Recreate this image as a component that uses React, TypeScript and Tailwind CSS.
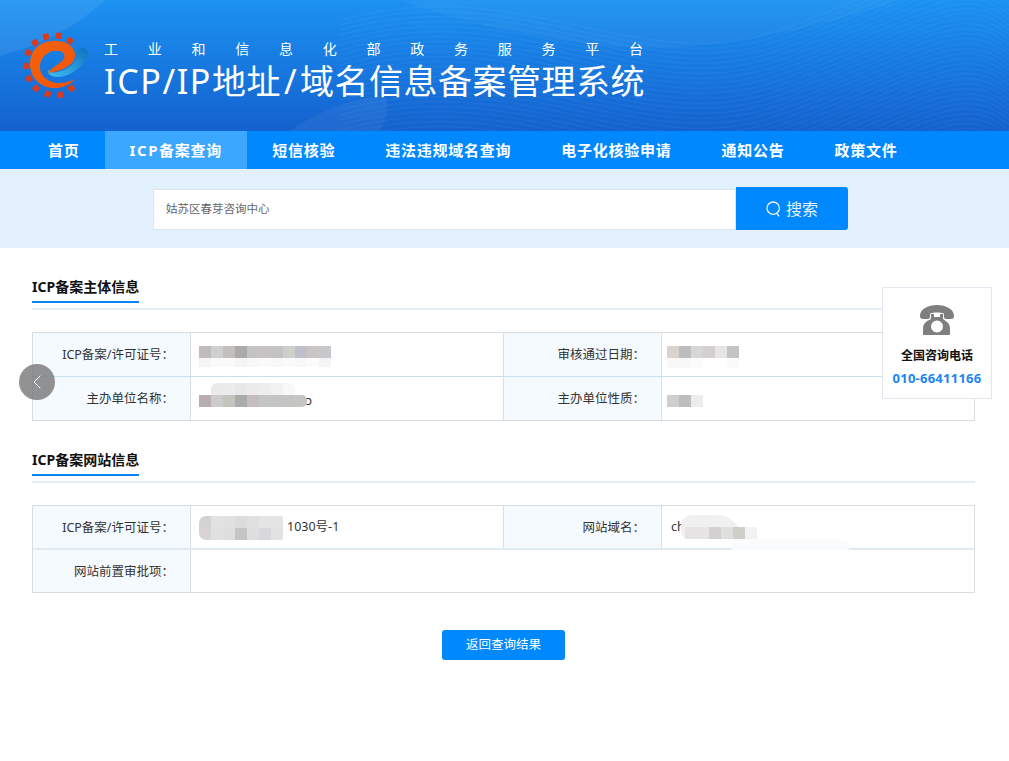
import { ReactNode } from 'react';
import { ChevronLeft } from 'lucide-react';

const navItems = ['首页', '备案查询', '短信核验', '违法违规域名查询', '电子化核验申请', '通知公告', '政策文件'];

function Logo() {
  const squares = [
    [12, 10.7, -35], [23, 4.7, -15], [36, 3.7, 5], [47, 8.7, 30], [5.3, 20.7, -60], [2.7, 34, 85],
    [6, 46.7, 65], [13, 56.3, 40], [24.7, 62, 15], [37, 62.7, -5], [48.3, 56.3, -35],
  ];
  return (
    <svg width="66" height="66" viewBox="0 0 66 66" className="shrink-0">
      <defs>
        <linearGradient id="ring" x1="0" y1="0" x2="1" y2="1">
          <stop offset="0" stopColor="#f4640f" />
          <stop offset="1" stopColor="#f15208" />
        </linearGradient>
        <linearGradient id="swoosh" x1="1" y1="0" x2="0" y2="1">
          <stop offset="0" stopColor="#0d72bd" />
          <stop offset="1" stopColor="#41bdf0" />
        </linearGradient>
      </defs>
      {squares.map(([x, y, r], i) => (
        <rect key={i} x={x - 3} y={y - 3} width="6" height="6" rx="0.8" fill="#db3a1c" transform={`rotate(${r} ${x} ${y})`} />
      ))}
      <path d="M54 17C60 15 66 17 65 22C63 32 48 45 35 45C28 45 24 42 25 38C28 41 33 41 38 39C48 36 56 28 54 17Z" fill="url(#swoosh)" />
      <path d="M52 47C44 56 30 59 19 53C7 46 4 31 10 20C16 9 32 6 43 11C52 15 55 24 49 31C43 37 33 40 25 41C28 36 35 33 39 29C43 25 42 20 36 19C27 17 18 24 17 33C16 44 26 51 36 51C42 51 48 49 52 47Z" fill="url(#ring)" />
    </svg>
  );
}

function HeaderDecor() {
  // faint wave lines on the right of the banner
  const lines = Array.from({ length: 46 }, (_, i) => {
    const y = i * 5 - 40;
    return `M340 ${y + 60} C 520 ${y + 10}, 640 ${y + 120}, 780 ${y + 70} S 960 ${y - 20}, 1009 ${y + 20}`;
  });
  return (
    <svg className="absolute inset-0" width="1009" height="131" viewBox="0 0 1009 131">
      <path d="M0 0H105C75 28 40 45 0 56Z" fill="#ffffff" fillOpacity="0.08" />
      <path d="M290 131C320 110 360 96 387 98C388 110 386 122 380 131Z" fill="#ffffff" fillOpacity="0.05" />
      <path d="M400 0C470 25 560 45 640 48C720 50 830 25 900 0Z" fill="#ffffff" fillOpacity="0.04" />
      {lines.map((d, i) => (
        <path key={i} d={d} fill="none" stroke="#ffffff" strokeOpacity="0.05" strokeWidth="1" />
      ))}
    </svg>
  );
}

function Phone() {
  return (
    <svg width="34" height="30" viewBox="0 0 34 30" fill="#7f7f7f">
      <path d="M0 11C0 4 8 0 17 0C26 0 34 4 34 11C34 13 33 14 31 14H26C24.5 14 24 13 24 11.5V8.5C20 7 14 7 10 8.5V11.5C10 13 9.5 14 8 14H3C1 14 0 13 0 11Z" />
      <path fillRule="evenodd" d="M11 9H14V12H20V9H23V13C23 14 24 15 25 15.5C28 17 30 20 30 23V29C30 29.6 29.6 30 29 30H4C3.4 30 3 29.6 3 29V23C3 20 5 17 8 15.5C10 15 11 14 11 13ZM17 15.5A6 6 0 1 0 17 27.5A6 6 0 1 0 17 15.5Z" />
    </svg>
  );
}

function SearchGlyph() {
  return (
    <svg width="15" height="16" viewBox="0 0 15 16" fill="none" stroke="currentColor" strokeWidth="1.3">
      <circle cx="7.2" cy="7.2" r="6.2" />
      <path d="M10.8 12.2L12.8 15" strokeLinecap="round" />
    </svg>
  );
}

function SectionTitle({ children }: { children: ReactNode }) {
  return (
    <div className="border-b-2 border-[#e1edf7] pb-[5px]">
      <div className="inline-block border-b-2 border-[#0a84f5] pb-[4px] text-[14px] font-bold leading-[20px] text-[#111]">{children}</div>
    </div>
  );
}

function Mosaic({ cells, className }: { cells: string[]; className: string }) {
  return (
    <div className={`absolute flex ${className}`}>
      {cells.map((c, i) => (
        <span key={i} className={`h-full w-[12px] ${c}`} />
      ))}
    </div>
  );
}

function Label({ children }: { children: ReactNode }) {
  return (
    <div className="flex h-full w-[158px] shrink-0 items-center justify-end border-r border-[#d8e0e6] bg-[#f5faff] pr-[16px] pt-[2px] text-[12.5px] text-[#333]">
      {children}
    </div>
  );
}

function Value({ children, className = '' }: { children?: ReactNode; className?: string }) {
  return <div className={`relative flex h-full items-center pl-[9px] pt-[1px] text-[12.5px] text-[#333] ${className}`}>{children}</div>;
}

export default function App() {
  return (
    <div className="relative h-[761px] w-[1009px] overflow-hidden bg-white font-['Noto_Sans','Noto_Sans_CJK_SC',sans-serif]">
      <header className="relative h-[131px] bg-linear-to-b from-[#1c92f2] to-[#1561ce]">
        <HeaderDecor />
        <div className="relative flex h-full items-start pl-[23px] pt-[32px]">
          <Logo />
          <div className="ml-[15px] text-white">
            <div className="mt-[7px] text-[14px] leading-[20px] tracking-[29.75px] whitespace-nowrap">工业和信息化部政务服务平台</div>
            <div className="mt-[1px] text-[34px] leading-[42px] tracking-[0.5px] whitespace-nowrap">
              <span className="tracking-[1.6px]">ICP/IP</span>地址<span className="px-[3px]">/</span>域名信息备案管理系统
            </div>
          </div>
        </div>
      </header>

      <nav className="flex h-[38px] bg-[#0088ff] pl-[23px]">
        {navItems.map((item, i) => (
          <a key={item} className={`flex items-center px-[25px] text-[15px] font-bold tracking-[0.75px] text-white ${i === 1 ? 'bg-[#3ba7ff]' : ''}`}>
            {i === 1 && <span className="tracking-[1.6px]">ICP</span>}
            {item}
          </a>
        ))}
      </nav>

      <div className="flex h-[79px] items-center bg-[#e3f0fe] pl-[153px]">
        <div className="mt-[1px] flex h-[41px] w-[583px] items-center border border-[#dfe5ee] bg-white pl-[12px] text-[11.5px] text-[#666]">姑苏区春芽咨询中心</div>
        <button className="flex h-[43px] w-[112px] items-center justify-center gap-[5px] rounded-r-[3px] bg-[#0088ff] text-[16px] text-[#e8f3ff]">
          <SearchGlyph />
          搜索
        </button>
      </div>

      <main className="px-[32px] pr-[34px] pt-[26px]">
        <SectionTitle>ICP备案主体信息</SectionTitle>
        <div className="mt-[22px] border border-[#d9dde0]">
          <div className="flex h-[44px] border-b border-[#c9deee]">
            <Label>ICP备案/许可证号：</Label>
            <Value className="w-[313px] border-r border-[#d8e0e6]">
              <Mosaic className="left-[8px] top-[13px] h-[12px]" cells={['bg-[#c0bcbc]', 'bg-[#cdd0ce]', 'bg-[#c4bfbd]', 'bg-[#ababab]', 'bg-[#c4c2c3]', 'bg-[#c4c2c3]', 'bg-[#c4c2c3]', 'bg-[#ccd0c8]', 'bg-[#bfc0ca]', 'bg-[#c8c5c4]', 'bg-[#c8c8cc]']} />
              <Mosaic className="left-[8px] top-[25px] h-[9px]" cells={['bg-[#f5f5f5]', 'bg-[#fafafa]', 'bg-[#fafafa]', 'bg-[#f5f5f5]', 'bg-[#f8f8f8]', 'bg-[#fafafa]', 'bg-[#f8f8f8]', 'bg-[#fafafa]', 'bg-[#f8f8f8]', 'bg-[#fcfcfc]', 'bg-[#f5f5f5]']} />
            </Value>
            <Label>审核通过日期：</Label>
            <Value className="flex-1">
              <Mosaic className="left-[5px] top-[13px] h-[12px]" cells={['bg-[#d9d2cf]', 'bg-[#bbbdbe]', 'bg-[#d6d6d6]', 'bg-[#d3cfd0]', 'bg-[#e5e5e5]', 'bg-[#c3c3c3]']} />
              <Mosaic className="left-[5px] top-[25px] h-[10px]" cells={['bg-[#f8f8f8]', 'bg-[#f8f8f8]', 'bg-[#fbfbfb]', 'bg-white', 'bg-white', 'bg-[#fbfbfb]']} />
            </Value>
          </div>
          <div className="flex h-[43px]">
            <Label>主办单位名称：</Label>
            <Value className="w-[313px] border-r border-[#d8e0e6]">
              <Mosaic className="left-[20px] top-[6px] h-[12px] overflow-hidden rounded-t-[6px]" cells={['bg-[#eaeaea]', 'bg-[#ececec]', 'bg-[#e8e8e8]', 'bg-[#ececec]', 'bg-[#eeeeee]', 'bg-[#f2f2f2]', 'bg-[#f8f8f8]']} />
              <Mosaic className="left-[8px] top-[18px] h-[12px] overflow-hidden rounded-r-[5px]" cells={['bg-[#b8aeb2]', 'bg-[#cbcbcb]', 'bg-[#c4c4be]', 'bg-[#ababab]', 'bg-[#c4bdc1]', 'bg-[#c6c5c5]', 'bg-[#c6c5c5]', 'bg-[#c4c4c2]', 'bg-[#c6c5c3]']} />
              <span className="absolute left-[115px] top-[14px] leading-[20px]">ↄ</span>
            </Value>
            <Label>主办单位性质：</Label>
            <Value className="flex-1">
              <Mosaic className="left-[5px] top-[18px] h-[12px]" cells={['bg-[#cfcfcf]', 'bg-[#bdbdbc]', 'bg-[#ececec]']} />
            </Value>
          </div>
        </div>

        <div className="mt-[26px]">
          <SectionTitle>ICP备案网站信息</SectionTitle>
        </div>
        <div className="mt-[22px] border border-[#d9dde0]">
          <div className="flex h-[44px] border-b-2 border-[#e0eaf3]">
            <Label>ICP备案/许可证号：</Label>
            <Value className="w-[313px] border-r border-[#d8e0e6]">
              <div className="absolute left-[8px] top-[10px] grid h-[24px] w-[88px] grid-cols-[repeat(7,12px)] grid-rows-2 overflow-hidden rounded-[7px]">
                {['bg-[#d5d2d2]', 'bg-[#e2e2e2]', 'bg-[#e0e0e0]', 'bg-[#dcdcdc]', 'bg-[#e0e0e0]', 'bg-[#e4e4e4]', 'bg-[#e4e4e4]', 'bg-[#d8d4d4]', 'bg-[#e0e0e0]', 'bg-[#dedede]', 'bg-[#c4c4c4]', 'bg-[#dedede]', 'bg-[#d8d8dc]', 'bg-[#e2e2e2]'].map((c, i) => (
                  <span key={i} className={c} />
                ))}
              </div>
              <span className="ml-[87px]">1030号-1</span>
            </Value>
            <Label>网站域名：</Label>
            <Value className="flex-1">
              ch
              <div className="absolute left-[19px] top-[9px] h-[24px] w-[60px] rounded-tl-[14px] rounded-tr-[30px] rounded-bl-[10px] bg-[#f0f0f0]" />
              <Mosaic className="left-[23px] top-[21px] h-[12px]" cells={['bg-[#e6e4e4]', 'bg-[#e6e4e4]', 'bg-[#d4cfd1]', 'bg-[#dfdfdd]', 'bg-[#d0cecb]', 'bg-[#f2f2f2]']} />
              <div className="absolute left-[70px] top-[33px] h-[12px] w-[117px] rounded-t-[6px] bg-[#f9fbfd]" />
            </Value>
          </div>
          <div className="flex h-[42px]">
            <Label>网站前置审批项：</Label>
            <Value className="flex-1" />
          </div>
        </div>

        <div className="mt-[37px] flex justify-center">
          <button className="h-[30px] w-[123px] rounded-[3px] bg-[#0088ff] text-[12.5px] text-white">返回查询结果</button>
        </div>
      </main>

      <button className="absolute left-[19px] top-[364px] flex h-[36px] w-[36px] items-center justify-center rounded-full bg-[#777]/80 text-white">
        <ChevronLeft className="h-[24px] w-[24px]" strokeWidth={1} />
      </button>

      <aside className="absolute left-[882px] top-[287px] flex h-[112px] w-[110px] flex-col items-center border border-[#e3e6ee] bg-white pt-[17px]">
        <Phone />
        <div className="mt-[12px] text-[12px] font-bold leading-[18px] text-[#111]">全国咨询电话</div>
        <div className="mt-[4px] text-[13px] font-bold leading-[18px] tracking-[0.25px] text-[#1c86f2]">010-66411166</div>
      </aside>
    </div>
  );
}
